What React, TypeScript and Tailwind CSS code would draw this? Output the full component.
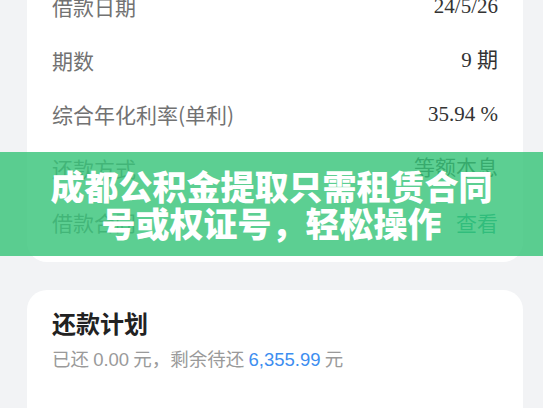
export default function App() {
  const rows = [
    { label: '借款日期', value: '24/5/26' },
    { label: '期数', value: '9 期' },
    { label: '综合年化利率(单利)', value: '35.94 %' },
    { label: '还款方式', value: '等额本息' },
  ];

  return (
    <div className="relative h-[408px] w-[543px] overflow-hidden bg-[#f2f3f5] font-['Noto_Sans_CJK_SC',sans-serif]">
      <div className="pl-[27px] pr-[20px]">
        {/* loan detail card, top scrolled off */}
        <div className="-mt-[20px] rounded-[20px] bg-white px-[25px] pb-3">
          {rows.map((r) => (
            <div key={r.label} className="flex h-[54px] items-center justify-between">
              <span className="text-[21px] text-[#727272]">{r.label}</span>
              <span className="font-['Liberation_Serif','Noto_Sans_CJK_SC',serif] text-[21px] text-[#333]">
                {r.value}
              </span>
            </div>
          ))}
          <div className="flex h-[54px] items-center justify-between">
            <span className="text-[21px] text-[#727272]">借款合同</span>
            <span className="text-[21px] text-[#139a86]">查看</span>
          </div>
        </div>

        {/* repayment plan */}
        <div className="mt-[28px] h-[200px] rounded-[20px] bg-white px-[25px] pt-[18px]">
          <div className="text-[24px] font-bold leading-[30px] text-[#222]">还款计划</div>
          <div className="mt-[6px] text-[18.5px] leading-[28px] text-[#9a9a9a]">
            已还 <span className="font-['Liberation_Sans',sans-serif]">0.00</span> 元，剩余待还{' '}
            <span className="font-['Liberation_Sans',sans-serif] text-[#3d8ef0]">6,355.99</span> 元
          </div>
        </div>
      </div>

      {/* green caption overlay */}
      <div className="absolute left-0 right-0 top-[152px] flex h-[104px] flex-col items-center justify-center bg-[rgba(56,197,122,0.82)] text-white">
        <div className="text-[34px] font-black leading-[37px]">成都公积金提取只需租赁合同</div>
        <div className="text-[34px] font-black leading-[37px]">号或权证号，轻松操作</div>
      </div>
    </div>
  );
}
